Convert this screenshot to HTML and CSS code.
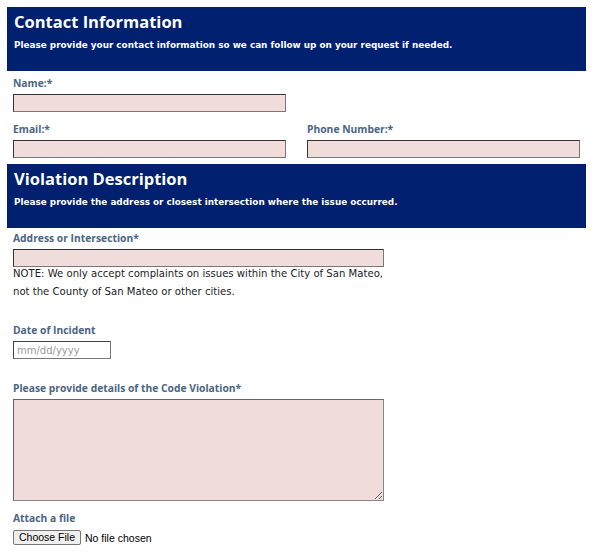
FILE: index.html
```html
<!DOCTYPE html>
<html>
<head>
<meta charset="utf-8">
<link rel="stylesheet" href="styles.css">
</head>
<body>
<form class="form">
  <section class="band">
    <h2 class="band-title">Contact Information</h2>
    <p class="band-sub">Please provide your contact information so we can follow up on your request if needed.</p>
  </section>
  <div class="grid">
    <div class="field">
      <label class="label">Name:*</label>
      <input class="input" type="text">
    </div>
    <div></div>
    <div class="field">
      <label class="label">Email:*</label>
      <input class="input" type="text">
    </div>
    <div class="field">
      <label class="label">Phone Number:*</label>
      <input class="input" type="text">
    </div>
  </div>
  <section class="band">
    <h2 class="band-title">Violation Description</h2>
    <p class="band-sub">Please provide the address or closest intersection where the issue occurred.</p>
  </section>
  <div class="block">
    <div class="field">
      <label class="label">Address or Intersection*</label>
      <input class="input wide" type="text">
      <p class="note">NOTE: We only accept complaints on issues within the City of San Mateo, not the County of San Mateo or other cities.</p>
    </div>
    <div class="field date-field">
      <label class="label">Date of Incident</label>
      <input class="input date" type="text" placeholder="mm/dd/yyyy">
    </div>
    <div class="field details-field">
      <label class="label">Please provide details of the Code Violation*</label>
      <textarea class="input area"></textarea>
    </div>
    <div class="field attach-field">
      <label class="label">Attach a file</label>
      <div class="file">
        <span class="file-btn">Choose File</span>
        <span class="file-text">No file chosen</span>
      </div>
    </div>
  </div>
</form>
</body>
</html>
```

FILE: styles.css
```css
* { box-sizing: border-box; }
body {
  margin: 0;
  padding: 7px;
  background: #fff;
  font-family: "DejaVu Sans", Verdana, sans-serif;
}
.form { width: 579px; }
.band {
  background: #01206f;
  color: #fff;
  height: 64px;
  padding: 4px 7px 0;
}
.band-title {
  margin: 0;
  font-family: "Open Sans", sans-serif;
  font-weight: 700;
  font-size: 16.5px;
  line-height: 22px;
}
.band-sub {
  margin: 6px 0 0;
  font-family: "DejaVu Sans", Verdana, sans-serif;
  font-size: 8.85px;
  font-weight: bold;
  line-height: 12px;
}
.grid {
  display: grid;
  grid-template-columns: 273px 273px;
  column-gap: 21px;
  row-gap: 10px;
  padding: 5px 6px 6px;
}
.field { display: flex; flex-direction: column; align-items: flex-start; }
.label {
  font-family: "Open Sans", sans-serif;
  font-weight: 700;
  font-size: 10.3px;
  line-height: 14px;
  color: #4b6582;
  margin-bottom: 4px;
}
.input {
  width: 273px;
  height: 18px;
  margin: 0;
  background: #f1dcdc;
  border: 1px solid #777;
  border-top-color: #333;
  border-left-color: #333;
  padding: 0 3px;
  font-family: "DejaVu Sans", sans-serif;
  font-size: 10px;
}
.block { padding: 3px 6px 8px; }
.wide { width: 371px; }
.note {
  margin: -2px 0 0;
  width: 380px;
  font-size: 10.1px;
  line-height: 18px;
  color: #222;
}
.date-field { margin-top: 22px; }
.date {
  width: 98px;
  background: #fff;
  border-color: #777;
  border-top-color: #444;
  border-left-color: #444;
}
.date::placeholder { color: #9a9a9a; font-size: 10px; }
.details-field { margin-top: 22px; }
.area {
  width: 371px;
  height: 102px;
  resize: both;
  border-color: #888;
  border-top-color: #666;
  border-left-color: #666;
}
.attach-field { margin-top: 10px; }
.attach-field .label { margin-bottom: 5px; }
.file { display: flex; align-items: center; gap: 4px; }
.file-btn {
  display: inline-block;
  height: 15px;
  padding: 0 5px;
  background: #efefef;
  border: 1px solid #767676;
  border-radius: 2px;
  font-family: "Liberation Sans", Arial, sans-serif;
  font-size: 10.5px;
  line-height: 13px;
  color: #000;
}
.file-text {
  font-family: "Liberation Sans", Arial, sans-serif;
  font-size: 10.5px;
  color: #000;
}
```
